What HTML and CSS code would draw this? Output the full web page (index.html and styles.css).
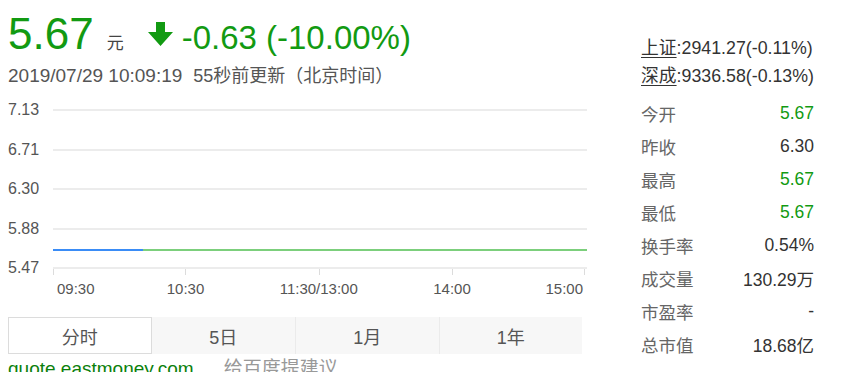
FILE: index.html
```html
<!DOCTYPE html>
<html lang="zh-CN">
<head>
<meta charset="utf-8">
<title>5.67</title>
<link rel="stylesheet" href="styles.css">
</head>
<body>
<div class="page">
  <div class="main">
    <div class="price-row">
      <span class="price">5.67</span>
      <span class="unit">元</span>
      <svg class="arrow" width="25" height="24" viewBox="0 0 25 24"><path d="M8 0h9v10h8L12.5 24 0 10h8z" fill="#129a12"/></svg>
      <span class="change">-0.63 (-10.00%)</span>
    </div>
    <div class="time">2019/07/29 10:09:19<span class="ago">55秒前更新（北京时间）</span></div>
    <div class="chart">
      <div class="y-axis">
        <span>7.13</span>
        <span>6.71</span>
        <span>6.30</span>
        <span>5.88</span>
        <span>5.47</span>
      </div>
      <svg class="plot" width="534" height="180" viewBox="0 0 534 180">
        <g stroke="#ececec" stroke-width="2">
          <line x1="0" y1="10" x2="534" y2="10"/>
          <line x1="0" y1="50" x2="534" y2="50"/>
          <line x1="0" y1="89" x2="534" y2="89"/>
          <line x1="0" y1="129" x2="534" y2="129"/>
          <line x1="0" y1="168" x2="534" y2="168"/>
        </g>
        <g stroke="#dcdcdc" stroke-width="1">
          <line x1="0.5" y1="169" x2="0.5" y2="175"/>
          <line x1="132.5" y1="169" x2="132.5" y2="175"/>
          <line x1="266.5" y1="169" x2="266.5" y2="175"/>
          <line x1="399.5" y1="169" x2="399.5" y2="175"/>
          <line x1="531.5" y1="169" x2="531.5" y2="175"/>
        </g>
        <line x1="90" y1="150" x2="534" y2="150" stroke="#7ccf7c" stroke-width="2"/>
        <line x1="0" y1="150" x2="90" y2="150" stroke="#3a8cf6" stroke-width="2"/>
      </svg>
      <div class="x-axis">
        <span class="first">09:30</span>
        <span>10:30</span>
        <span>11:30/13:00</span>
        <span>14:00</span>
        <span class="last">15:00</span>
      </div>
    </div>
    <div class="tabs">
      <div class="tab active">分时</div>
      <div class="tab">5日</div>
      <div class="tab">1月</div>
      <div class="tab">1年</div>
    </div>
    <div class="footer">
      <span class="site">quote.eastmoney.com</span>
      <span class="suggest">给百度提建议</span>
    </div>
  </div>
  <aside class="side">
    <div class="index"><span class="index-name">上证</span>:2941.27(-0.11%)</div>
    <div class="index"><span class="index-name">深成</span>:9336.58(-0.13%)</div>
    <ul class="stats">
      <li><span class="label">今开</span><span class="value down">5.67</span></li>
      <li><span class="label">昨收</span><span class="value">6.30</span></li>
      <li><span class="label">最高</span><span class="value down">5.67</span></li>
      <li><span class="label">最低</span><span class="value down">5.67</span></li>
      <li><span class="label">换手率</span><span class="value">0.54%</span></li>
      <li><span class="label">成交量</span><span class="value">130.29万</span></li>
      <li><span class="label">市盈率</span><span class="value">-</span></li>
      <li><span class="label">总市值</span><span class="value">18.68亿</span></li>
    </ul>
  </aside>
</div>
</body>
</html>
```
FILE: styles.css
```css
html, body {
  margin: 0;
  padding: 0;
  background: #fff;
  overflow: hidden;
}

body {
  font-family: "Liberation Sans", Arial, "Noto Sans CJK SC", sans-serif;
  color: #333;
}

.page {
  display: flex;
  padding: 0 8px;
  height: 372px;
}

.main {
  width: 580px;
  flex: none;
}

.price-row {
  display: flex;
  align-items: baseline;
  margin-top: 12px;
  height: 44px;
}

.price {
  font-size: 44px;
  line-height: 44px;
  color: #129a12;
}

.unit {
  font-size: 17px;
  line-height: 1;
  color: #444;
  margin-left: 13px;
}

.arrow {
  align-self: flex-start;
  margin-top: 10px;
  margin-left: 24px;
  flex: none;
}

.change {
  font-size: 33px;
  line-height: 1;
  color: #129a12;
  margin-left: 9px;
}

.time {
  margin-top: 10px;
  font-size: 19px;
  line-height: 20px;
  color: #555;
  white-space: nowrap;
}

.ago {
  margin-left: 11px;
  font-size: 18px;
}

.chart {
  display: grid;
  grid-template-columns: 45px 534px;
  margin-top: 14px;
}

.y-axis {
  display: flex;
  flex-direction: column;
  gap: 19.5px;
  font-size: 16px;
  line-height: 20px;
  color: #555;
}

.plot {
  display: block;
}

.x-axis {
  grid-column: 2;
  display: grid;
  grid-template-columns: 66px 133px 133.5px 133px 1fr;
  font-size: 15px;
  line-height: 18px;
  color: #555;
  text-align: center;
  white-space: nowrap;
}

.x-axis .first {
  text-align: left;
  padding-left: 4px;
}

.x-axis .last {
  text-align: right;
  padding-right: 4px;
}

.tabs {
  display: grid;
  grid-template-columns: repeat(4, 1fr);
  width: 574px;
  height: 37px;
  margin-top: 19px;
  background: #f7f7f7;
}

.tab {
  display: flex;
  align-items: center;
  justify-content: center;
  font-size: 18px;
  color: #555;
  border-left: 1px solid #ebebeb;
}

.tab.active {
  background: #fff;
  border: 1px solid #dcdcdc;
}

.tab.active + .tab {
  border-left: none;
}

.footer {
  margin-top: 4px;
  font-size: 19px;
  line-height: 22px;
  white-space: nowrap;
}

.site {
  color: #0b800b;
}

.suggest {
  color: #999;
  margin-left: 25px;
}

.side {
  width: 173px;
  margin-left: 53px;
  padding-top: 34px;
  flex: none;
}

.index {
  font-size: 17.8px;
  line-height: 28px;
  color: #333;
  white-space: nowrap;
}

.index-name {
  text-decoration: underline;
  text-underline-offset: 3px;
}

.stats {
  list-style: none;
  margin: 6.5px 0 0;
  padding: 0;
}

.stats li {
  display: flex;
  justify-content: space-between;
  align-items: center;
  height: 33px;
  font-size: 17.5px;
}

.label {
  color: #666;
}

.value {
  color: #333;
}

.value.down {
  color: #129a12;
}
```
